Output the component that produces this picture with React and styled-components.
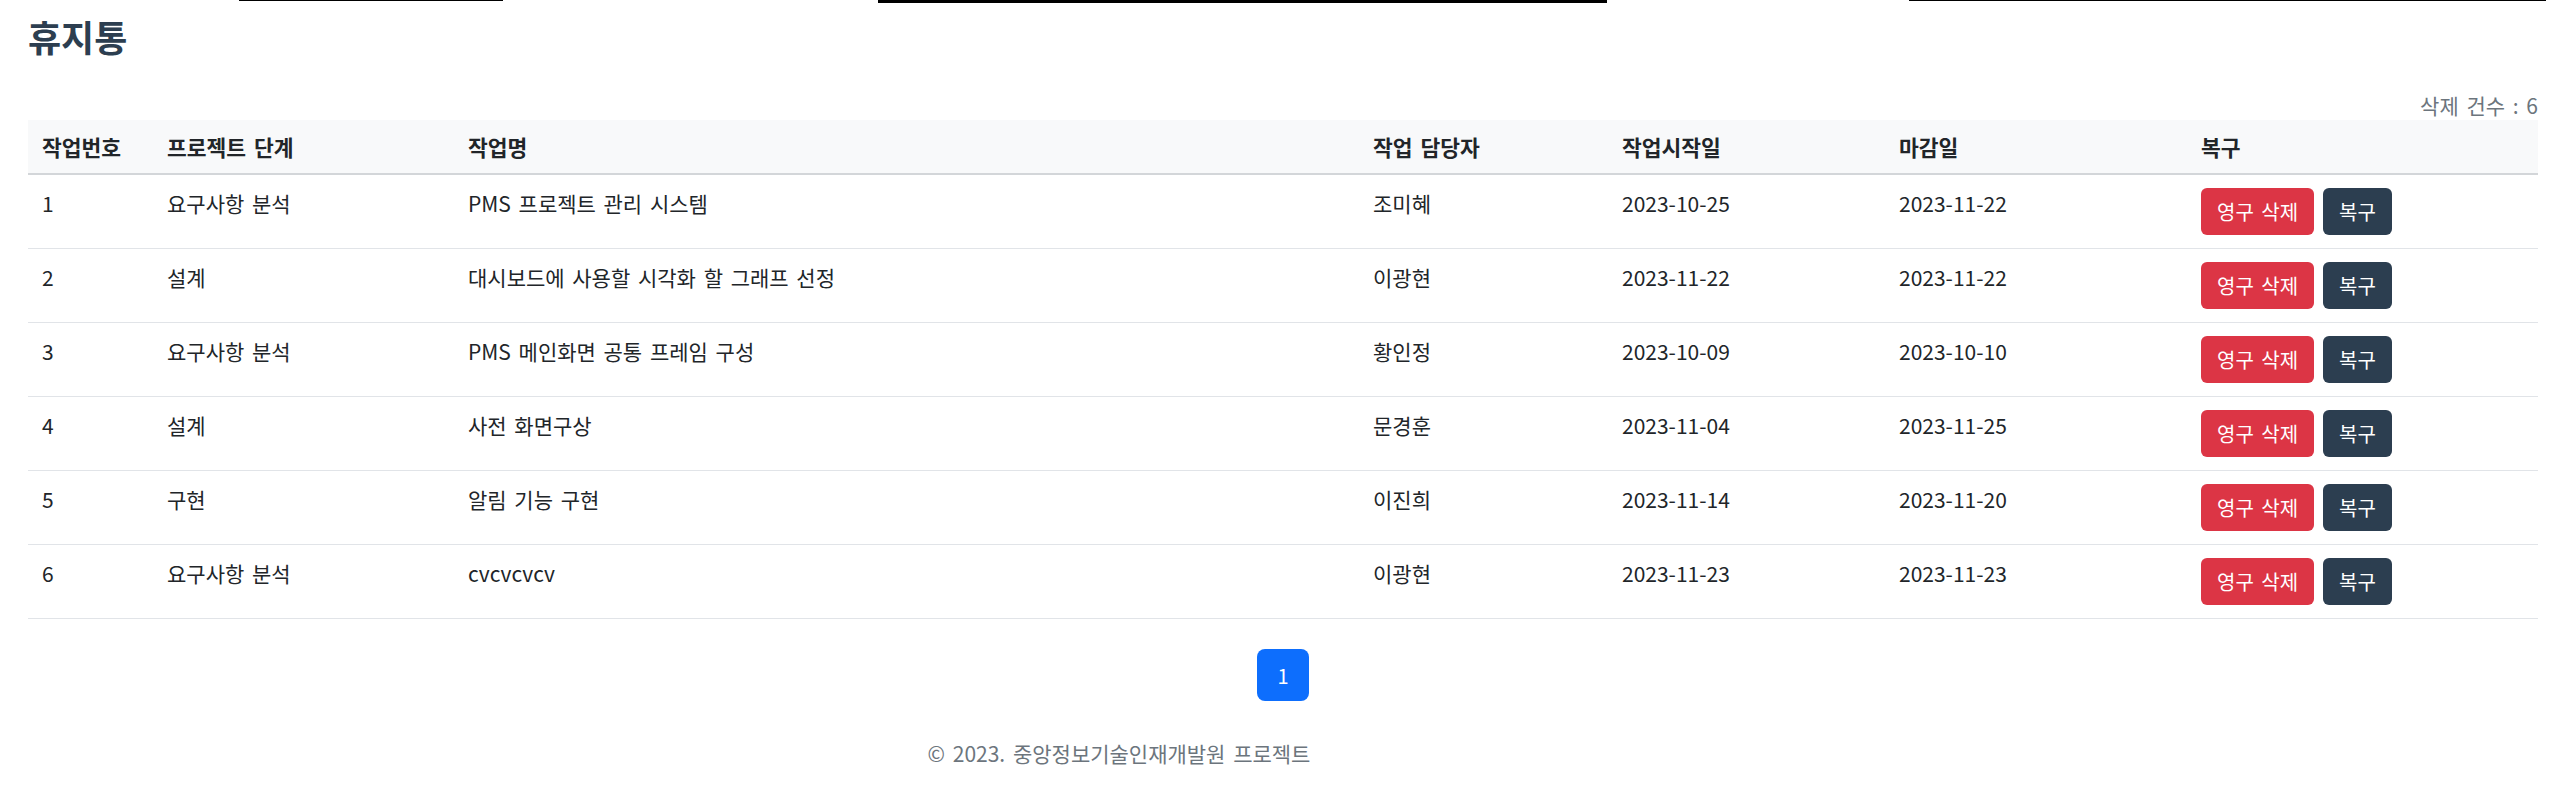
import styled, { createGlobalStyle } from 'styled-components';

const GlobalStyle = createGlobalStyle`
    body {
        margin: 0;
        background: #fff;
        font-family: "Noto Sans CJK KR", "Noto Sans", sans-serif;
        color: #212529;
        word-spacing: 3px;
    }
`;

const TopStrip = styled.div`
    display: flex;
    align-items: flex-start;
    height: 3px;
`;

const Line = styled.div`
    margin-left: ${(p) => p.$offset}px;
    width: ${(p) => p.$width}px;
    height: ${(p) => p.$thick}px;
    background: #000;
`;

const Page = styled.div`
    padding: 0 34px 0 28px;
`;

const Title = styled.h2`
    margin: 11px 0 0;
    font-size: 36px;
    line-height: 44px;
    font-weight: 700;
    color: #2c3e50;
`;

const Count = styled.div`
    margin-top: 34px;
    text-align: right;
    font-size: 21px;
    line-height: 26px;
    color: #6c757d;
`;

const Table = styled.table`
    width: 100%;
    margin-top: 2px;
    border-collapse: collapse;
    table-layout: fixed;
`;

const HeadCell = styled.th`
    text-align: left;
    background: #f8f9fa;
    padding: 13px 14px;
    font-size: 21.5px;
    line-height: 27px;
    font-weight: 700;
    border-bottom: 2px solid #d3d6d9;
    white-space: nowrap;
`;

const Row = styled.tr`
    border-bottom: 1px solid #e1e4e8;
`;

const Cell = styled.td`
    vertical-align: top;
    padding: 13px 14px;
    font-size: 21px;
    line-height: 30px;
    color: #212529;
    white-space: nowrap;
`;

const Actions = styled.div`
    display: flex;
    gap: 9px;
`;

const Button = styled.button`
    height: 47px;
    padding: 0 16px;
    border: none;
    border-radius: 6px;
    font-family: inherit;
    font-size: 20px;
    word-spacing: 3px;
    color: #fff;
    background: ${(p) => (p.$danger ? '#dc3545' : '#2c3e50')};
    cursor: pointer;
`;

const Pager = styled.div`
    display: flex;
    justify-content: center;
    margin-top: 30px;
`;

const PageItem = styled.div`
    width: 52px;
    height: 52px;
    border-radius: 8px;
    background: #0d6efd;
    color: #fff;
    font-size: 20px;
    display: flex;
    align-items: center;
    justify-content: center;
`;

const Footer = styled.footer`
    margin-top: 37px;
    padding-right: 334px;
    text-align: center;
    font-size: 21px;
    line-height: 30px;
    color: #6c757d;
`;

const columns = [
    { label: '작업번호', width: 125 },
    { label: '프로젝트 단계', width: 301 },
    { label: '작업명', width: 905 },
    { label: '작업 담당자', width: 249 },
    { label: '작업시작일', width: 277 },
    { label: '마감일', width: 302 },
    { label: '복구', width: 351 },
];

const rows = [
    { no: 1, step: '요구사항 분석', name: 'PMS 프로젝트 관리 시스템', owner: '조미혜', start: '2023-10-25', end: '2023-11-22' },
    { no: 2, step: '설계', name: '대시보드에 사용할 시각화 할 그래프 선정', owner: '이광현', start: '2023-11-22', end: '2023-11-22' },
    { no: 3, step: '요구사항 분석', name: 'PMS 메인화면 공통 프레임 구성', owner: '황인정', start: '2023-10-09', end: '2023-10-10' },
    { no: 4, step: '설계', name: '사전 화면구상', owner: '문경훈', start: '2023-11-04', end: '2023-11-25' },
    { no: 5, step: '구현', name: '알림 기능 구현', owner: '이진희', start: '2023-11-14', end: '2023-11-20' },
    { no: 6, step: '요구사항 분석', name: 'cvcvcvcv', owner: '이광현', start: '2023-11-23', end: '2023-11-23' },
];

const App = () => {
    return (
        <>
            <GlobalStyle />
            <TopStrip>
                <Line $offset={239} $width={264} $thick={1} />
                <Line $offset={375} $width={729} $thick={3} />
                <Line $offset={302} $width={637} $thick={1} />
            </TopStrip>
            <Page>
                <Title>휴지통</Title>
                <Count>삭제 건수 : {rows.length}</Count>
                <Table>
                    <colgroup>
                        {columns.map((c) => (
                            <col key={c.label} style={{ width: c.width }} />
                        ))}
                    </colgroup>
                    <thead>
                        <tr>
                            {columns.map((c) => (
                                <HeadCell key={c.label}>{c.label}</HeadCell>
                            ))}
                        </tr>
                    </thead>
                    <tbody>
                        {rows.map((r) => (
                            <Row key={r.no}>
                                <Cell>{r.no}</Cell>
                                <Cell>{r.step}</Cell>
                                <Cell>{r.name}</Cell>
                                <Cell>{r.owner}</Cell>
                                <Cell>{r.start}</Cell>
                                <Cell>{r.end}</Cell>
                                <Cell>
                                    <Actions>
                                        <Button $danger>영구 삭제</Button>
                                        <Button>복구</Button>
                                    </Actions>
                                </Cell>
                            </Row>
                        ))}
                    </tbody>
                </Table>
                <Pager>
                    <PageItem>1</PageItem>
                </Pager>
            </Page>
            <Footer>© 2023. 중앙정보기술인재개발원 프로젝트</Footer>
        </>
    );
};

export default App;
